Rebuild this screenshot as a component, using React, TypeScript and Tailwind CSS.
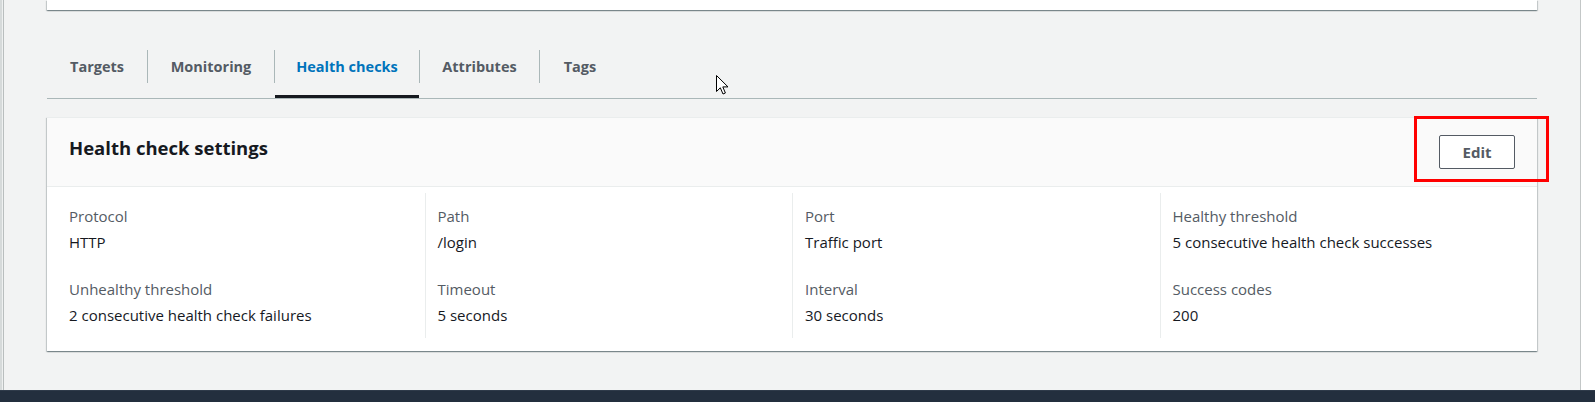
import React from "react";

const tabs = [
  { label: "Targets", w: "w-[100px]", active: false },
  { label: "Monitoring", w: "w-[126px]", active: false },
  { label: "Health checks", w: "w-[144px]", active: true },
  { label: "Attributes", w: "w-[119px]", active: false },
  { label: "Tags", w: "w-[80px]", active: false },
];

const columns = [
  [
    { label: "Protocol", value: "HTTP" },
    { label: "Unhealthy threshold", value: "2 consecutive health check failures" },
  ],
  [
    { label: "Path", value: "/login" },
    { label: "Timeout", value: "5 seconds" },
  ],
  [
    { label: "Port", value: "Traffic port" },
    { label: "Interval", value: "30 seconds" },
  ],
  [
    { label: "Healthy threshold", value: "5 consecutive health check successes" },
    { label: "Success codes", value: "200" },
  ],
];

function Cursor() {
  return (
    <svg width="13" height="20" viewBox="0 0 13 20" className="absolute left-[712px] top-[75px]">
      <path
        d="M0.5 0.5 L0.5 16.5 L4.3 12.8 L7 19 L9.4 18 L6.8 11.9 L12 11.9 Z"
        fill="#ffffff"
        stroke="#000000"
        strokeWidth="1"
        strokeLinejoin="miter"
      />
    </svg>
  );
}

export default function App() {
  return (
    <div className="w-[1595px] h-[402px] overflow-hidden flex flex-col bg-white font-['Open_Sans',sans-serif]">
      <div className="flex h-[390px]">
        <div className="w-[2px] bg-[#d6dada]" />
        <div className="w-[1px] bg-[#eef0f0]" />
        <div className="w-[1px] bg-[#b9bebe]" />
        <main className="relative w-[1576px] bg-[#f2f3f3] px-[43px]">
          {/* top card remnant */}
          <div className="h-[10px] bg-white shadow-[0_1px_1px_0_rgba(0,28,36,0.3),1px_1px_1px_0_rgba(0,28,36,0.15),-1px_1px_1px_0_rgba(0,28,36,0.15)]" />

          {/* tabs */}
          <div className="mt-[30px] flex h-[59px] border-b border-[#aab7b8]">
            {tabs.map((t, i) => (
              <React.Fragment key={t.label}>
                {i > 0 && <div className="w-[1px] h-[33px] mt-[10px] bg-[#aab7b8]" />}
                <div className={`${t.w} flex flex-col`}>
                  <div
                    className={`flex-1 flex items-center justify-center pb-[2px] text-[14.5px] font-bold ${
                      t.active ? "text-[#0073bb]" : "text-[#545b64]"
                    }`}
                  >
                    {t.label}
                  </div>
                  <div className={`h-[3px] ${t.active ? "bg-[#16191f]" : "bg-transparent"}`} />
                </div>
              </React.Fragment>
            ))}
          </div>

          {/* health check settings card */}
          <section className="relative mt-[18px] bg-white border-t border-[#eaeded] shadow-[0_1px_1px_0_rgba(0,28,36,0.3),1px_1px_1px_0_rgba(0,28,36,0.15),-1px_1px_1px_0_rgba(0,28,36,0.15)]">
            <div className="h-[69px] flex items-center justify-between px-[22px] bg-[#fafafa] border-b border-[#eaeded]">
              <h2 className="text-[18.5px] font-bold text-[#16191f] leading-[24px] -mt-[8px]">
                Health check settings
              </h2>
              <button className="w-[76px] h-[34px] bg-white border border-[#545b64] rounded-[2px] text-[15px] font-bold text-[#545b64] leading-none">
                Edit
              </button>
            </div>
            <div className="grid grid-cols-4 px-[10px] pt-[6px] pb-[13px]">
              {columns.map((col, ci) => (
                <div
                  key={ci}
                  className={`pl-[12px] pt-[12px] pb-[12px] flex flex-col gap-[25px] ${
                    ci > 0 ? "border-l border-[#eaeded]" : ""
                  }`}
                >
                  {col.map((f) => (
                    <div key={f.label} className="flex flex-col gap-[4px]">
                      <div className="text-[15px] leading-[22px] text-[#545b64]">{f.label}</div>
                      <div className="text-[15px] leading-[22px] text-[#16191f]">{f.value}</div>
                    </div>
                  ))}
                </div>
              ))}
            </div>
            {/* red highlight box */}
            <div className="absolute top-[-2px] right-[-12px] w-[135px] h-[66px] border-[3px] border-[#ff0000]" />
          </section>

          <Cursor />
        </main>
        <div className="w-[1px] bg-[#c3c7c7]" />
        <div className="flex-1 bg-white" />
      </div>
      <footer className="h-[12px] bg-[#232f3e] border-t border-[#2f3b4a]" />
    </div>
  );
}
